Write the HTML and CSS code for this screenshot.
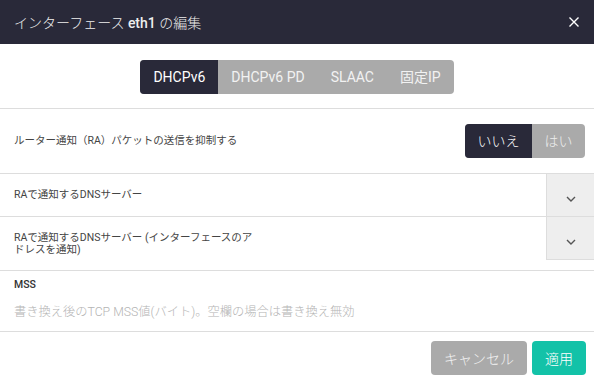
FILE: index.html
```html
<!DOCTYPE html>
<html lang="ja">
<head>
  <meta charset="UTF-8">
  <meta name="viewport" content="width=device-width, initial-scale=1.0">
  <title>インターフェース eth1 の編集</title>
  <link rel="stylesheet" href="styles.css">
</head>
<body>
  <div class="dialog">
    <header class="dialog-header">
      <h1>インターフェース <b>eth1</b> の編集</h1>
      <button class="close" aria-label="閉じる">
        <svg width="12" height="12" viewBox="0 0 12 12"><path d="M1.5 1.5 L10.5 10.5 M10.5 1.5 L1.5 10.5" stroke="#fff" stroke-width="1.4" fill="none"/></svg>
      </button>
    </header>

    <div class="tabs-section">
      <div class="tabs">
        <span class="tab active">DHCPv6</span>
        <span class="tab">DHCPv6 PD</span>
        <span class="tab">SLAAC</span>
        <span class="tab">固定IP</span>
      </div>
    </div>

    <div class="row row-toggle">
      <span class="label">ルーター通知（RA）パケットの送信を抑制する</span>
      <div class="toggle">
        <span class="toggle-item selected">いいえ</span>
        <span class="toggle-item">はい</span>
      </div>
    </div>

    <div class="row row-select">
      <span class="label">RAで通知するDNSサーバー</span>
      <div class="select-box">
        <svg width="10" height="6" viewBox="0 0 10 6"><path d="M1 1 L5 5 L9 1" stroke="#555" stroke-width="1.4" fill="none"/></svg>
      </div>
    </div>

    <div class="row row-select">
      <span class="label">RAで通知するDNSサーバー (インターフェースのアドレスを通知)</span>
      <div class="select-box">
        <svg width="10" height="6" viewBox="0 0 10 6"><path d="M1 1 L5 5 L9 1" stroke="#555" stroke-width="1.4" fill="none"/></svg>
      </div>
    </div>

    <div class="field">
      <label for="mss">MSS</label>
      <input type="text" id="mss" placeholder="書き換え後のTCP MSS値(バイト)。空欄の場合は書き換え無効">
    </div>

    <footer class="dialog-footer">
      <button class="btn btn-cancel">キャンセル</button>
      <button class="btn btn-apply">適用</button>
    </footer>
  </div>
</body>
</html>
```

FILE: styles.css
```css
body {
  margin: 0;
  background: #fff;
  font-family: Roboto, "Noto Sans CJK JP", sans-serif;
  color: #333;
}

.dialog {
  width: 594px;
}

.dialog-header {
  height: 44px;
  background: #292939;
  display: flex;
  align-items: center;
  justify-content: space-between;
  padding: 0 14px 0 14px;
}

.dialog-header h1 {
  margin: 0;
  font-size: 14px;
  font-weight: 300;
  color: #eee;
}

.dialog-header h1 b {
  font-weight: 500;
}

.close {
  background: none;
  border: none;
  padding: 0;
  width: 12px;
  height: 12px;
  display: flex;
  align-items: center;
  justify-content: center;
  cursor: pointer;
}

.tabs-section {
  display: flex;
  justify-content: center;
  padding: 16px 0 14px;
  border-bottom: 1px solid #ddd;
}

.tabs {
  display: flex;
  border-radius: 4px;
  overflow: hidden;
  background: #aaa;
}

.tab {
  height: 34px;
  line-height: 34px;
  padding: 0 13px;
  font-size: 14px;
  color: #f2f2f2;
}

.tab.active {
  background: #292939;
  color: #fff;
}

.row {
  display: flex;
  align-items: center;
  border-bottom: 1px solid #ddd;
}

.label {
  font-size: 10.5px;
  line-height: 12px;
  color: #444;
  padding: 14.5px 14px;
  width: 244px;
}

.row-toggle {
  justify-content: space-between;
  padding: 15px 9px 15px 0;
}

.row-toggle .label {
  width: auto;
  padding: 0 14px;
}

.toggle {
  display: flex;
  border-radius: 4px;
  overflow: hidden;
  background: #aaa;
}

.toggle-item {
  height: 34px;
  line-height: 34px;
  padding: 0 12.5px;
  font-size: 14px;
  font-weight: 300;
  color: #eee;
}

.toggle-item.selected {
  background: #292939;
  color: #fff;
}

.select-box {
  margin-left: auto;
  align-self: flex-start;
  box-sizing: border-box;
  width: 48px;
  height: 43px;
  margin-bottom: -1px;
  background: #eee;
  border-left: 1px solid #ddd;
  border-bottom: 1px solid #ddd;
  display: flex;
  align-items: center;
  justify-content: center;
  padding-top: 8px;
}

.field {
  display: flex;
  flex-direction: column;
  padding: 8px 0 5px;
  border-bottom: 1px solid #ddd;
}

.field label {
  font-size: 10.5px;
  line-height: 12px;
  font-weight: 500;
  padding: 0 14px;
  color: #333;
}

.field input {
  margin-top: 7px;
  height: 28px;
  border: none;
  outline: none;
  padding: 0 14px;
  font-family: inherit;
  font-size: 12.25px;
  font-weight: 300;
  color: #333;
}

.field input::placeholder {
  color: #b4b4b4;
}

.dialog-footer {
  display: flex;
  justify-content: flex-end;
  gap: 5px;
  padding: 9px 8px 0;
}

.btn {
  height: 34px;
  padding: 0 13px;
  border: none;
  border-radius: 4px;
  font-family: inherit;
  font-size: 14px;
  font-weight: 300;
  color: #fff;
  cursor: pointer;
}

.btn-cancel {
  background: #aaa;
  color: #f2f2f2;
}

.btn-apply {
  background: #13c2a8;
}
```
